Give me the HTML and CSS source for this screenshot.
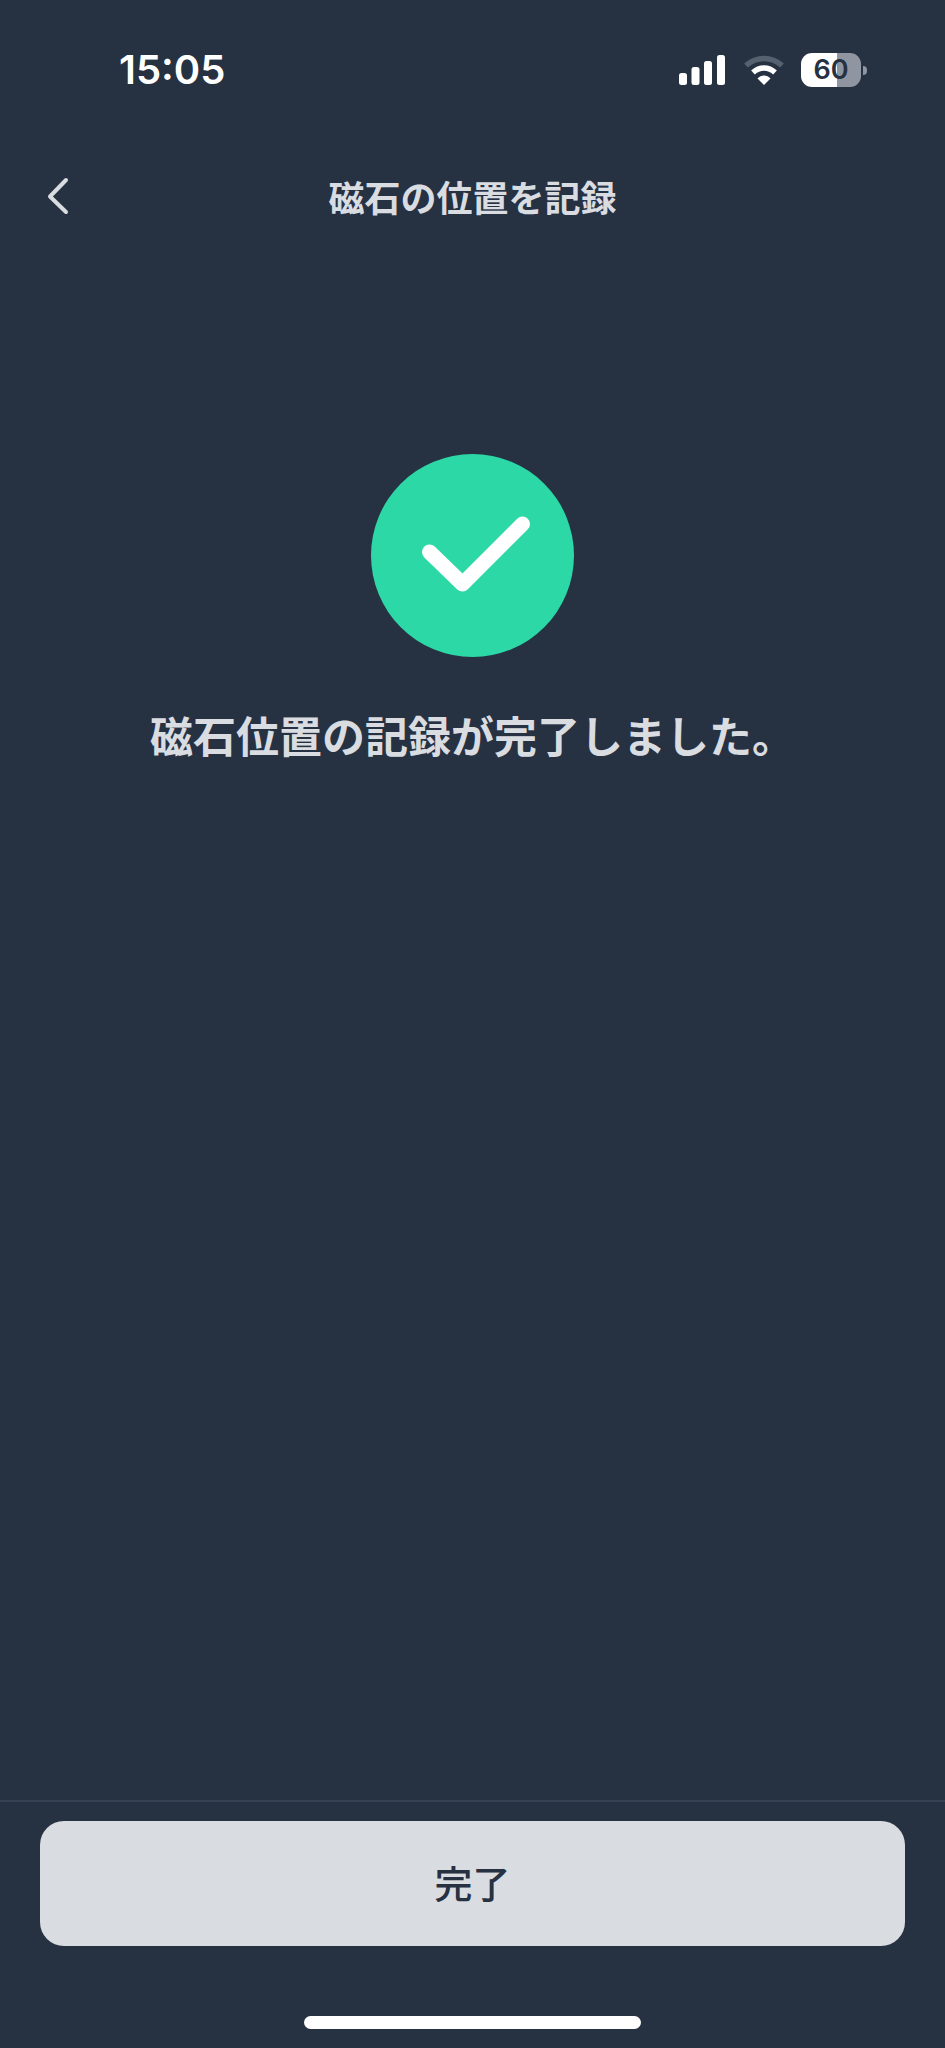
FILE: index.html
```html
<!DOCTYPE html>
<html lang="ja">
  <head>
    <meta charset="utf-8">
    <title>磁石の位置を記録</title>
    <link rel="stylesheet" href="styles.css">
  </head>
  <body>
    <div class="statusBar">
      <span class="time">15:05</span>
      <div class="statusIcons">
        <svg class="signal" width="46" height="30" viewBox="0 0 46 30">
          <rect x="0" y="18" width="8" height="12" rx="2.5" fill="#fff"/>
          <rect x="12.5" y="12" width="8" height="18" rx="2.5" fill="#fff"/>
          <rect x="25" y="6" width="8" height="24" rx="2.5" fill="#fff"/>
          <rect x="38" y="0" width="8" height="30" rx="2.5" fill="#fff"/>
        </svg>
        <svg class="wifi" width="40" height="30" viewBox="0 0 40 30">
          <path d="M2 10.5C12.5 1 27.5 1 38 10.5" fill="none" stroke="#566170" stroke-width="5.5"/>
          <path d="M9 17.5C15.5 11.5 24.5 11.5 31 17.5" fill="none" stroke="#fff" stroke-width="5.5"/>
          <path d="M13.5 23.5C17 19.5 23 19.5 26.5 23.5L20 30Z" fill="#fff"/>
        </svg>
        <div class="battery"><span class="batteryLevel">60</span></div>
        <span class="batteryNub"></span>
      </div>
    </div>
    <header class="navBar">
      <svg class="back" width="24" height="38" viewBox="0 0 24 38">
        <path d="M20 3L4 19.5L20 35" fill="none" stroke="#d9dce0" stroke-width="4" stroke-linecap="round" stroke-linejoin="round"/>
      </svg>
      <h1 class="title">磁石の位置を記録</h1>
    </header>
    <main class="content">
      <svg class="checkIcon" width="203" height="203" viewBox="0 0 203 203">
        <circle cx="101.5" cy="101.5" r="101.5" fill="#2dd8a7"/>
        <path d="M58.5 98L91.5 130L151.5 70" fill="none" stroke="#fff" stroke-width="15" stroke-linecap="round" stroke-linejoin="round"/>
      </svg>
      <p class="message">磁石位置の記録が完了しました。</p>
    </main>
    <footer class="footer">
      <button class="doneButton">完了</button>
      <div class="homeBar"></div>
    </footer>
  </body>
</html>
```

FILE: styles.css
```css
html,
body {
  margin: 0;
  height: 2048px;
  overflow: hidden;
}
body {
  display: flex;
  flex-direction: column;
  width: 945px;
  background: #263142;
  color: #d9dce0;
  font-family: "Noto Sans CJK JP", "Noto Sans", sans-serif;
}
.statusBar {
  display: flex;
  justify-content: space-between;
  align-items: center;
  height: 34px;
  padding: 53px 78px 0 119px;
}
.time {
  color: #fff;
  font-family: Inter, sans-serif;
  font-size: 40px;
  font-weight: 600;
  line-height: 34px;
}
.statusIcons {
  display: flex;
  align-items: center;
}
.signal {
  margin-right: 19px;
}
.wifi {
  margin-right: 17px;
}
.battery {
  display: flex;
  justify-content: center;
  align-items: center;
  width: 60px;
  height: 34px;
  border-radius: 11px;
  background: linear-gradient(to right, #fff 60%, #8f96a1 60%);
}
.batteryLevel {
  color: #263142;
  font-family: Inter, sans-serif;
  font-size: 27px;
  font-weight: 600;
  line-height: 34px;
}
.batteryNub {
  width: 4px;
  height: 9px;
  margin-left: 2px;
  border-radius: 0 4px 4px 0;
  background: #8f96a1;
}
.navBar {
  display: flex;
  justify-content: center;
  align-items: center;
  position: relative;
  height: 60px;
  margin-top: 79px;
}
.back {
  position: absolute;
  left: 46px;
  top: 11px;
}
.title {
  margin: 0;
  font-size: 36px;
  font-weight: 700;
  line-height: 60px;
}
.content {
  display: flex;
  flex: 1;
  flex-direction: column;
  align-items: center;
  padding-top: 228px;
}
.message {
  margin: 46px 0 0;
  font-size: 43px;
  font-weight: 700;
  line-height: 62px;
}
.footer {
  display: flex;
  flex-direction: column;
  align-items: center;
  height: 248px;
  box-sizing: border-box;
  padding-top: 19px;
  border-top: 2px solid #364254;
}
.doneButton {
  width: 865px;
  height: 125px;
  padding: 0 0 4px;
  border: 0;
  border-radius: 24px;
  background: #d9dce0;
  color: #263142;
  font-family: inherit;
  font-size: 38px;
  font-weight: 500;
}
.homeBar {
  width: 337px;
  height: 13px;
  margin-top: 70px;
  border-radius: 7px;
  background: #fff;
}
```
